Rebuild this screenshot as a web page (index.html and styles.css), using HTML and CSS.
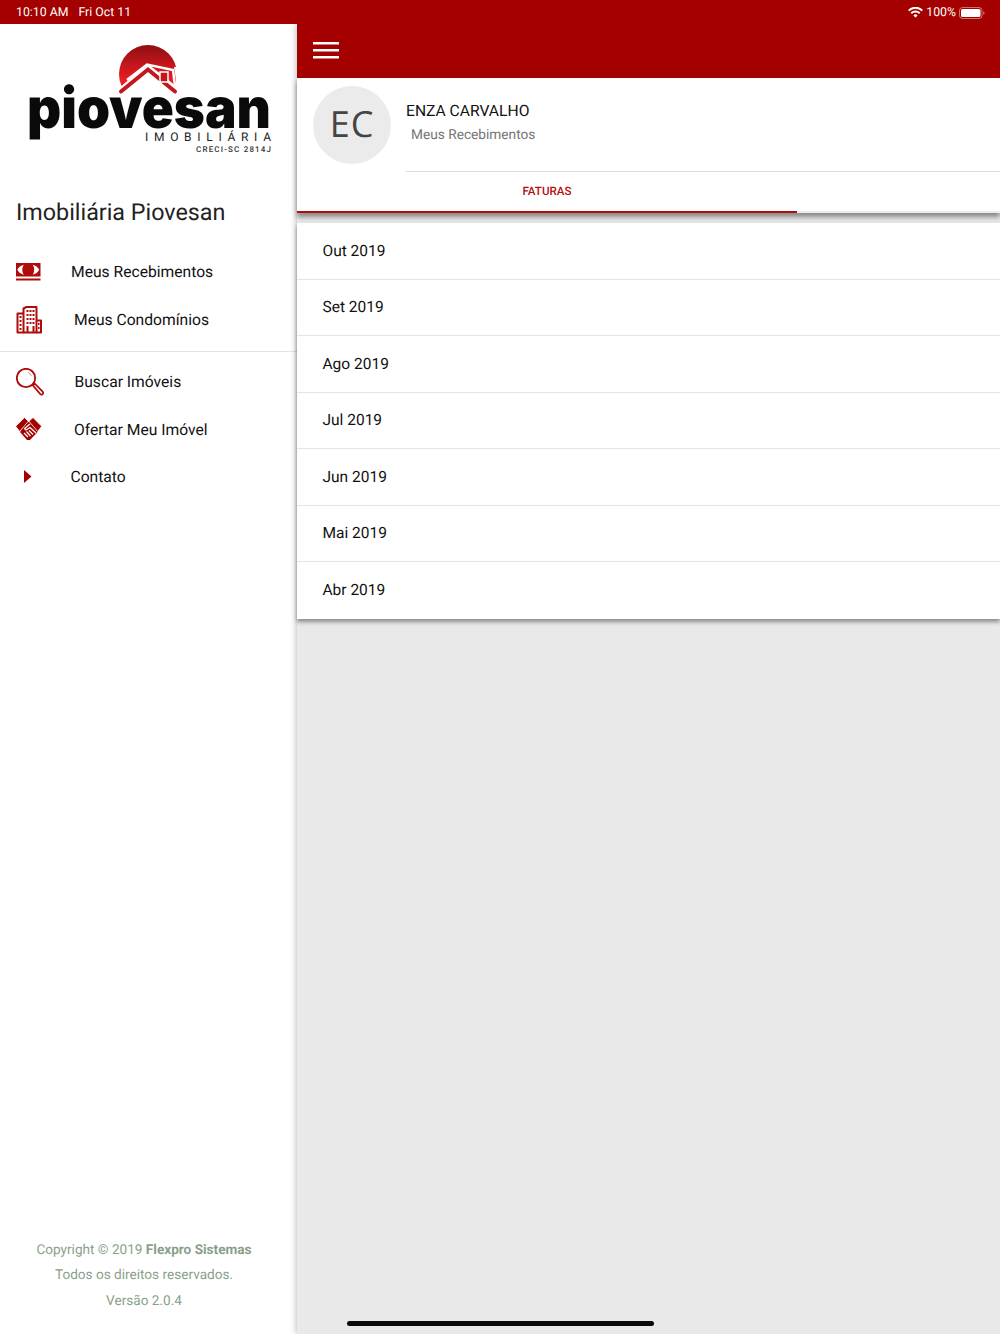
FILE: index.html
```html
<!DOCTYPE html>
<html lang="pt">
<head>
<meta charset="utf-8">
<title>Piovesan</title>
<link rel="stylesheet" href="styles.css">
</head>
<body>
<div class="status">
  <div class="status-left"><span>10:10 AM</span><span>Fri Oct 11</span></div>
  <div class="status-right">
    <svg class="wifi" width="15" height="11" viewBox="0 0 15 11"><path d="M7.5 10.6 5.4 8.4a3 3 0 0 1 4.200 0zM3.900 6.900 2.600 5.500a7 7 0 0 1 9.800 0l-1.300 1.400a5.100 5.100 0 0 0-7.200 0zM1.300 4.200 0 2.900a10.600 10.600 0 0 1 15 0l-1.300 1.300a8.800 8.800 0 0 0-12.400 0z" fill="#fff"/></svg>
    <span>100%</span>
    <svg class="battery" width="26" height="12" viewBox="0 0 26 12"><rect x=".5" y=".5" width="22.500" height="11" rx="3" fill="none" stroke="#fff" stroke-opacity=".45"/><rect x="2" y="2" width="19.500" height="8" rx="1.600" fill="#fff"/><path d="M24.300 4.200c.8.2 1.200.9 1.200 1.800s-.4 1.600-1.200 1.800z" fill="#fff" fill-opacity=".5"/></svg>
  </div>
</div>
<div class="app">
  <aside class="side">
    <svg class="logo" width="297" height="128" viewBox="0 0 297 128">
      <defs>
        <linearGradient id="sun" x1="0" y1="0" x2="0" y2="1"><stop offset="0" stop-color="#8f0f12"/><stop offset=".62" stop-color="#ee1c25"/><stop offset="1" stop-color="#b50f15"/></linearGradient>
      </defs>
      <circle cx="148" cy="40" r="29" fill="url(#sun)"/>
      <path d="M114 58 148 30l28 22v20h-62z" fill="#fff"/>
      <path d="M121 57.500 148 35.500l27 22" fill="none" stroke="#c4161c" stroke-width="4" stroke-linecap="round"/>
      <path d="M127 46 147 30.500l26 5.500 2 16" fill="none" stroke="#fff" stroke-width="2.500"/>
      <path d="M174 33l3 20h3V33z" fill="#fff"/>
      <rect x="160" y="38" width="8" height="10" fill="#c4161c" stroke="#fff" stroke-width="1.500"/>
      <text class="logo-word" x="27" y="94" textLength="244" lengthAdjust="spacingAndGlyphs">piovesan</text>
      <text class="logo-sub" x="145" y="107" textLength="126">IMOBILIÁRIA</text>
      <text class="logo-creci" x="196" y="117.500" textLength="75">CRECI-SC 2814J</text>
    </svg>
    <h1 class="side-title">Imobiliária Piovesan</h1>
    <nav class="menu">
      <a class="item">
        <svg class="ico" width="25" height="18" viewBox="0 0 25 18"><path d="M0 0h24.500v13.500H0zM0 15.500h24.500v2H0z" fill="#b00b0b"/><path d="M7.800 1.800C4 3 2.500 4.500 1.300 6.800c1.200 2.300 2.700 3.800 6.500 5-1-1.500-1.500-3.200-1.500-5s.5-3.500 1.500-5zM16.700 1.800c3.800 1.200 5.300 2.700 6.500 5-1.200 2.300-2.700 3.800-6.500 5 1-1.500 1.500-3.200 1.500-5s-.5-3.500-1.500-5z" fill="#fff"/></svg>
        <span class="label l1">Meus Recebimentos</span>
      </a>
      <a class="item">
        <svg class="ico" width="27" height="28" viewBox="0 0 27 28"><g fill="none" stroke="#b00b0b" stroke-width="2" stroke-linejoin="round"><path d="M7.500 26.500V2.500l3-1.500h10v25.500z"/><path d="M7.500 7.500H1.500v19h6M20.500 14.500h4.500v12h-4.500"/></g><path d="M3.500 10h2v2h-2zM3.500 14h2v2h-2zM3.500 18h2v2h-2zM3.500 22h2v2h-2zM10.500 4h2v2h-2zM13.500 4h2v2h-2zM16.500 4h2v2h-2zM10.500 8h2v2h-2zM13.500 8h2v2h-2zM16.500 8h2v2h-2zM10.500 12h2v2h-2zM13.500 12h2v2h-2zM16.500 12h2v2h-2zM10.500 16h2v2h-2zM13.500 16h2v2h-2zM16.500 16h2v2h-2zM10.500 20h2v6h-2zM16.500 20h2v6h-2zM22 17h1.500v2H22zM22 21h1.500v2H22z" fill="#b00b0b"/></svg>
        <span class="label l2">Meus Condomínios</span>
      </a>
    </nav>
    <div class="menu-sep"></div>
    <nav class="menu menu-b">
      <a class="item">
        <svg class="ico" width="28" height="28" viewBox="0 0 28 28"><g fill="none" stroke="#b00b0b"><circle cx="10" cy="10" r="9.200" stroke-width="1.800"/><path d="M12 4.500A6 6 0 0 1 15.500 8" stroke-width="1" opacity=".45"/><path d="M17 17.500l1.800-1.800 7.900 8a1.700 1.700 0 0 1-2.400 2.400z" stroke-width="1.700"/></g></svg>
        <span class="label l2b">Buscar Imóveis</span>
      </a>
      <a class="item">
        <svg class="ico" width="27" height="24" viewBox="0 0 27 24"><path d="M10 5h6L22.500 14 14 23h-3L4 15z" fill="#a50000"/><path d="M-.3 9.300 8.500.5l3.800 3.800L3.700 14.500zM25.700 9.300 17 .5 13 4.300 21.700 14.500z" fill="#a50000" stroke="#fff" stroke-width=".8"/><g fill="none" stroke="#fff" stroke-width="1.200"><path d="M14 7 8.500 11.500l1.500 1.500 4-2.500 6 5.500"/><path d="M8 16l4 4M10.500 14.500l4 4.500M13 13.500l4 4"/></g></svg>
        <span class="label l2">Ofertar Meu Imóvel</span>
      </a>
      <a class="item">
        <svg class="ico ico-caret" width="8" height="13" viewBox="0 0 8 13"><path d="M0 0l7.500 6.500L0 13z" fill="#a50000"/></svg>
        <span class="label l3">Contato</span>
      </a>
    </nav>
    <footer class="foot">
      <p>Copyright © 2019 <b>Flexpro Sistemas</b></p>
      <p>Todos os direitos reservados.</p>
      <p>Versão 2.0.4</p>
    </footer>
  </aside>
  <main class="main">
    <header class="bar">
      <svg width="26" height="17" viewBox="0 0 26 17"><path d="M0 0h26v2.500H0zM0 7h26v2.500H0zM0 14h26v2.500H0z" fill="#fff"/></svg>
    </header>
    <section class="panel">
      <div class="profile">
        <div class="avatar">EC</div>
        <div class="who">
          <div class="name">ENZA CARVALHO</div>
          <div class="sub">Meus Recebimentos</div>
        </div>
      </div>
      <div class="tabs"><div class="tab">FATURAS</div></div>
    </section>
    <ul class="months">
      <li>Out 2019</li>
      <li>Set 2019</li>
      <li>Ago 2019</li>
      <li>Jul 2019</li>
      <li>Jun 2019</li>
      <li>Mai 2019</li>
      <li>Abr 2019</li>
    </ul>
  </main>
</div>
<div class="home"></div>
</body>
</html>
```
FILE: styles.css
```css
* { box-sizing: border-box; }
html, body { margin: 0; height: 100%; }
body {
  width: 1000px; height: 1334px; overflow: hidden; position: relative;
  display: flex; flex-direction: column;
  font-family: Roboto, "Liberation Sans", sans-serif; color: #111; background: #e9e9e9;
  text-rendering: geometricPrecision;
}
.status {
  height: 24px; flex: none; background: #a50000; color: #fff; font-size: 12.300px;
  display: flex; justify-content: space-between; align-items: center; padding: 1px 15px 0 16px;
  position: relative; z-index: 5;
}
.status-left { display: flex; gap: 10px; }
.status-right { display: flex; align-items: center; gap: 3px; }
.app { flex: 1; display: flex; min-height: 0; }
.side { width: 297px; flex: none; background: #fff; display: flex; flex-direction: column; }
.logo { display: block; margin-top: 10px; flex: none; }
.logo-word { font-family: Inter, sans-serif; font-weight: 900; font-size: 56px; fill: #0a0a0a; }
.logo-sub { font-family: Roboto, sans-serif; font-size: 12px; fill: #222; }
.logo-creci { font-family: Roboto, sans-serif; font-weight: 500; font-size: 8px; fill: #333; }
.side-title { margin: 34px 0 19.500px 16px; font-size: 23.300px; line-height: 32px; font-weight: 400; color: #222; }
.menu { display: flex; flex-direction: column; }
.menu-b .item { height: 47.500px; }
.item { height: 48px; display: flex; align-items: center; padding-left: 16px; font-size: 15.650px; color: #111; }
.ico { flex: none; }
.ico-caret { margin-left: 8px; }
.label { display: block; }
.l1 { margin-left: 30px; }
.l2 { margin-left: 31px; }
.l2b { margin-left: 30.500px; }
.l3 { margin-left: 38.500px; }
.menu-sep { height: 1px; background: #e3e3e3; margin: 7px 0 6.500px; }
.foot { margin-top: auto; padding: 0 9px 20px 0; text-align: center; font-size: 13.600px; line-height: 25.500px; color: #8a9f8a; }
.foot p { margin: 0; }
.foot b { font-weight: 700; }
.main {
  flex: 1; min-width: 0; display: flex; flex-direction: column; position: relative; z-index: 2;
  background: #e9e9e9; box-shadow: -1px 0 6px rgba(0,0,0,.25);
}
.bar { height: 54px; flex: none; background: #a50000; display: flex; align-items: center; padding-left: 16px; }
.bar svg { margin-top: -1px; }
.panel { height: 135px; flex: none; background: #fff; display: flex; flex-direction: column; box-shadow: 0 4px 5px rgba(0,0,0,.42); position: relative; z-index: 1; }
.profile { height: 94px; flex: none; display: flex; padding: 8px 0 0 16px; }
.avatar {
  width: 78px; height: 78px; border-radius: 50%; background: #ebebeb; color: #444; flex: none;
  display: flex; align-items: center; justify-content: center; padding-bottom: 4px;
  font-family: "Open Sans", sans-serif; font-size: 36px; letter-spacing: 1px;
}
.who { flex: 1; margin-left: 15px; border-bottom: 1px solid #dedede; padding-top: 14px; }
.name { font-size: 15.650px; line-height: 22px; color: #111; }
.sub { font-size: 13.700px; line-height: 20px; color: #757575; margin: 3px 0 0 5px; }
.tabs { flex: 1; display: flex; border-bottom: 2px solid #ececec; }
.tab {
  width: 500px; display: flex; align-items: center; justify-content: center; margin-bottom: -2px; padding-bottom: 1px;
  font-size: 11.600px; font-weight: 500; color: #b80c0c; border-bottom: 2px solid #b80c0c;
}
.months {
  list-style: none; margin: 10px 0 0; padding: 0; background: #fff; flex: none;
  box-shadow: 0 3px 4px rgba(0,0,0,.4);
}
.months li {
  height: 56.500px; display: flex; align-items: center; padding-left: 25.500px;
  font-size: 15.500px; color: #111; border-bottom: 1px solid #e4e4e4;
}
.months li:last-child { border-bottom: 0; }
.home { position: absolute; left: 347px; bottom: 8px; width: 307px; height: 5px; border-radius: 3px; background: #0a0a0a; z-index: 3; }
```
